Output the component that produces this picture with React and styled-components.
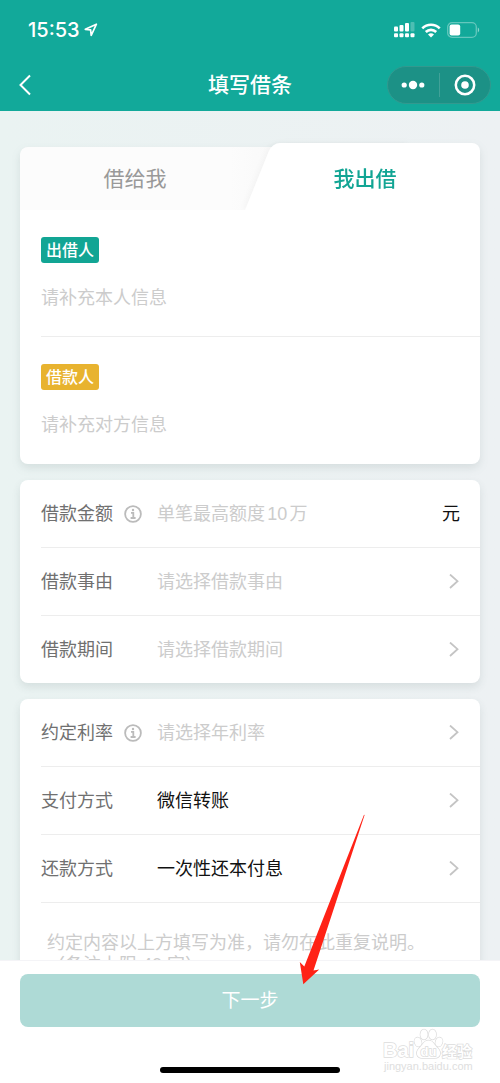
import React, { useState } from 'react'
import styled, { createGlobalStyle } from 'styled-components'

const GlobalStyle = createGlobalStyle`
* {
    box-sizing: border-box;
}

body {
    margin: 0;
    background: #fff;
}

body, button, input, select, textarea {
    font-family: 'Liberation Sans', 'Noto Sans CJK SC', sans-serif;
}

button {
    border: 0;
    padding: 0;
    background: none;
    cursor: pointer;
}
`

const Screen = styled.div`
position: relative;
display: flex;
flex-direction: column;
width: 100%;
height: 100vh;
overflow: hidden;
`

const Header = styled.header`
flex: none;
background: #12a99a;
color: #fff;
`

const StatusBar = styled.div`
display: flex;
align-items: center;
justify-content: space-between;
height: 60px;
padding: 0 20px 0 28px;
`

const Clock = styled.div`
display: flex;
align-items: center;
gap: 4px;
font: 500 20px/24px Inter, sans-serif;
`

const StatusIcons = styled.div`
display: flex;
align-items: center;
gap: 6px;
`

const NavBar = styled.nav`
display: grid;
grid-template-columns: 1fr auto 1fr;
align-items: center;
height: 51px;
padding: 0 9px 2px;
`

const BackButton = styled.button`
display: flex;
justify-self: start;
padding: 8px;
color: #fff;
`

const Title = styled.h1`
margin: 0;
font-size: 21px;
line-height: 28px;
font-weight: 500;
`

const Capsule = styled.div`
display: flex;
align-items: center;
justify-self: end;
width: 104px;
height: 38px;
border: 1px solid #32998f;
border-radius: 19px;
background: #1c9186;
`

const CapsuleButton = styled.button`
display: flex;
flex: 1;
align-items: center;
justify-content: center;
height: 24px;
color: #fff;

& + & {
    border-left: 1px solid #41a198;
}
`

const Main = styled.main`
display: flex;
flex: 1;
flex-direction: column;
gap: 16px;
min-height: 0;
padding: 32px 20px 0;
overflow: hidden;
background: linear-gradient(to right, #eaf3f2, #edf1f3);
`

const Card = styled.section`
flex: none;
border-radius: 8px;
background: #fff;
box-shadow: 0 4px 8px rgba(60, 80, 80, 0.12);
`

const PartyCard = styled.section`
flex: none;
filter: drop-shadow(0 4px 4px rgba(60, 80, 80, 0.12));
`

const Tabs = styled.div`
display: flex;
height: 67px;
`

const Tab = styled.button`
position: relative;
flex: 1;
padding-top: 5px;
isolation: isolate;
font-size: 21px;
line-height: 28px;
font-weight: ${props => (props.$active ? 500 : 400)};
color: ${props => (props.$active ? '#12a594' : '#999')};
`

const LeftTab = styled(Tab)`
&::before {
    content: '';
    position: absolute;
    z-index: -1;
    top: 4px;
    right: -32px;
    bottom: 0;
    left: 0;
    border-radius: 8px 0 0 0;
    background: linear-gradient(to right, #fcfcfc 80%, #f8f8f8);
}
`

/* slanted left edge is a skewed block, the straight right part is a second one */
const RightTab = styled(Tab)`
&::before, &::after {
    content: '';
    position: absolute;
    z-index: -1;
    top: 0;
    bottom: 0;
    background: #fff;
}

&::before {
    left: -5px;
    width: 60%;
    border-radius: 8px 0 0 0;
    transform: skewX(-22deg);
    transform-origin: left bottom;
    box-shadow: -2px 0 6px rgba(0, 0, 0, 0.03);
}

&::after {
    right: 0;
    width: 60%;
    border-radius: 0 8px 0 0;
}
`

const Parties = styled.div`
position: relative;
padding-left: 21px;
border-radius: 0 0 8px 8px;
background: #fff;
`

const Party = styled.div`
display: flex;
flex-direction: column;
align-items: flex-start;
gap: 22px;
padding: 27px 0 25px;
border-bottom: 1px solid #ededed;

&:last-child {
    border-color: transparent;
}
`

const Tag = styled.span`
padding: 1px 5px 0;
border-radius: 3px;
background: ${props => props.$color};
color: #fff;
font-size: 16px;
line-height: 25px;
font-weight: 500;
`

const PartyButton = styled.button`
color: #ccc;
font-size: 18px;
line-height: 26px;
`

const Row = styled.div`
display: flex;
align-items: center;
height: 68px;
margin-left: 21px;
padding-right: 20px;
border-bottom: 1px solid #ededed;

&:last-child {
    height: 67px;
    border-bottom: 0;
}
`

const RowHead = styled.div`
display: flex;
flex: none;
align-items: center;
gap: 11px;
width: 116px;
`

const Label = styled.label`
color: #707070;
font-size: 18px;
line-height: 26px;
`

const InfoButton = styled.button`
display: flex;
color: #bbb;
`

const TextInput = styled.input`
flex: 1;
min-width: 0;
padding: 0;
border: 0;
outline: 0;
background: none;
color: #111;
font-size: 18px;
line-height: 26px;
text-autospace: normal;

&::placeholder {
    color: #ccc;
}
`

const Select = styled.select`
flex: 1;
min-width: 0;
padding: 0;
border: 0;
outline: 0;
appearance: none;
background: none;
color: ${props => (props.$empty ? '#ccc' : '#111')};
font-size: 18px;
line-height: 26px;
`

const Unit = styled.span`
color: #111;
font-size: 18px;
line-height: 26px;
`

const Note = styled.textarea`
display: block;
width: 100%;
height: 120px;
padding: 29px 20px 0 27px;
border: 0;
outline: 0;
resize: none;
background: none;
font-size: 18px;
line-height: 22px;

&::placeholder {
    color: #ccc;
}
`

const Footer = styled.footer`
position: relative;
display: flex;
flex: none;
flex-direction: column;
align-items: center;
gap: 40px;
padding: 13px 20px 10px;
border-top: 1px solid #f4f4f7;
background: #fff;
`

const NextButton = styled.button`
width: 100%;
height: 53px;
border-radius: 8px;
background: #aedad6;
color: #fff;
font-size: 19px;
line-height: 26px;
`

const HomeIndicator = styled.div`
width: 39%;
height: 6px;
border-radius: 3px;
background: #000;
`

const Watermark = styled.svg`
position: absolute;
right: 24px;
bottom: 8px;
`

const Arrow = styled.svg`
position: absolute;
left: 59%;
bottom: 93px;
pointer-events: none;
`

const Chevron = () => (
    <svg width="12" height="16" viewBox="0 0 12 16" fill="none" stroke="#c4c4c4" strokeWidth="1.8" aria-hidden="true">
        <path d="M2 .5l7.500 6.700L2 14" />
    </svg>
)

const InfoIcon = () => (
    <svg width="18" height="18" viewBox="0 0 18 18" fill="none" stroke="currentColor" strokeWidth="1.8">
        <circle cx="9" cy="9" r="7.9" />
        <path d="M7 7.8h2.3v5M6.6 13h5" />
        <circle cx="9" cy="5" r="1.2" fill="currentColor" stroke="none" />
    </svg>
)

const LocationIcon = () => (
    <svg width="14" height="14" viewBox="0 0 14 14" fill="none" stroke="#fff" strokeWidth="1.7" strokeLinejoin="round">
        <path d="M12.4 1.2L1.3 6.3l5.3.5.6 5.7z" />
    </svg>
)

const SignalIcon = () => (
    <svg width="21" height="16" viewBox="0 0 21 16" fill="#fff">
        <rect x="0" y="4.5" width="4" height="5" rx="1" />
        <rect x="5.5" y="3" width="4" height="6.5" rx="1" />
        <rect x="11" y="1" width="4" height="8.5" rx="1" />
        <rect x="16.5" y="0" width="4" height="9.5" rx="1" opacity="0.25" />
        <rect x="0" y="11.3" width="4" height="4" rx="1" />
        <rect x="5.5" y="11.3" width="4" height="4" rx="1" />
        <rect x="11" y="11.3" width="4" height="4" rx="1" />
        <rect x="16.5" y="11.3" width="4" height="4" rx="1" />
    </svg>
)

const WifiIcon = () => (
    <svg width="20" height="15" viewBox="0 0 20 15" fill="none" stroke="#fff" strokeWidth="2.6">
        <path d="M1.3 5.4a12.3 12.3 0 0 1 17.4 0" />
        <path d="M4.8 9a7.4 7.4 0 0 1 10.4 0" />
        <path d="M10 14.6l-3-3a4.3 4.3 0 0 1 6 0z" fill="#fff" stroke="none" />
    </svg>
)

const BatteryIcon = () => (
    <svg width="33" height="16" viewBox="0 0 33 16" fill="none">
        <rect x="0.7" y="0.7" width="28.6" height="14.6" rx="4.4" stroke="#fff" strokeOpacity="0.35" strokeWidth="1.3" />
        <rect x="2.6" y="2.6" width="10.6" height="10.8" rx="2" fill="#fff" />
        <path d="M30.8 5.6c1.8.7 1.8 4.1 0 4.8z" fill="#fff" fillOpacity="0.5" />
    </svg>
)

const SelectRow = ({ id, label, info, placeholder, options }) => {
    const [value, setValue] = useState(placeholder ? '' : options[0])

    return (
        <Row>
            <RowHead>
                <Label htmlFor={id}>{label}</Label>
                {info && <InfoButton type="button" aria-label={info}><InfoIcon /></InfoButton>}
            </RowHead>
            <Select id={id} value={value} $empty={!value} onChange={e => setValue(e.target.value)}>
                {placeholder && <option value="">{placeholder}</option>}
                {options.map(option => <option key={option}>{option}</option>)}
            </Select>
            <Chevron />
        </Row>
    )
}

const App = () => {
    const [tab, setTab] = useState('lend')

    return (
        <Screen>
            <GlobalStyle />
            <Header>
                <StatusBar>
                    <Clock>15:53<LocationIcon /></Clock>
                    <StatusIcons>
                        <SignalIcon />
                        <WifiIcon />
                        <BatteryIcon />
                    </StatusIcons>
                </StatusBar>
                <NavBar>
                    <BackButton type="button" aria-label="返回">
                        <svg width="16" height="22" viewBox="0 0 16 22" fill="none" stroke="currentColor" strokeWidth="2">
                            <path d="M13 1.5L3.5 11l9.5 9.5" />
                        </svg>
                    </BackButton>
                    <Title>填写借条</Title>
                    <Capsule>
                        <CapsuleButton type="button" aria-label="更多">
                            <svg width="24" height="10" viewBox="0 0 24 10" fill="currentColor">
                                <circle cx="3.2" cy="5" r="2.6" />
                                <circle cx="12" cy="5" r="4.2" />
                                <circle cx="20.8" cy="5" r="2.6" />
                            </svg>
                        </CapsuleButton>
                        <CapsuleButton type="button" aria-label="关闭">
                            <svg width="22" height="22" viewBox="0 0 22 22" fill="none">
                                <circle cx="11" cy="11" r="9.2" stroke="currentColor" strokeWidth="2.5" />
                                <circle cx="11" cy="11" r="3.8" fill="currentColor" />
                            </svg>
                        </CapsuleButton>
                    </Capsule>
                </NavBar>
            </Header>

            <Main>
                <PartyCard>
                    <Tabs role="tablist">
                        <LeftTab type="button" role="tab" aria-selected={tab === 'borrow'} $active={tab === 'borrow'} onClick={() => setTab('borrow')}>借给我</LeftTab>
                        <RightTab type="button" role="tab" aria-selected={tab === 'lend'} $active={tab === 'lend'} onClick={() => setTab('lend')}>我出借</RightTab>
                    </Tabs>
                    <Parties>
                        <Party>
                            <Tag $color="#12a594">出借人</Tag>
                            <PartyButton type="button">请补充本人信息</PartyButton>
                        </Party>
                        <Party>
                            <Tag $color="#e8b32f">借款人</Tag>
                            <PartyButton type="button">请补充对方信息</PartyButton>
                        </Party>
                    </Parties>
                </PartyCard>

                <Card>
                    <Row>
                        <RowHead>
                            <Label htmlFor="amount">借款金额</Label>
                            <InfoButton type="button" aria-label="金额说明"><InfoIcon /></InfoButton>
                        </RowHead>
                        <TextInput id="amount" inputMode="numeric" placeholder="单笔最高额度10万" />
                        <Unit>元</Unit>
                    </Row>
                    <SelectRow id="reason" label="借款事由" placeholder="请选择借款事由" options={['资金周转', '其他']} />
                    <SelectRow id="period" label="借款期间" placeholder="请选择借款期间" options={['一个月', '一年']} />
                </Card>

                <Card>
                    <SelectRow id="rate" label="约定利率" info="利率说明" placeholder="请选择年利率" options={['0%', '6%']} />
                    <SelectRow id="pay" label="支付方式" options={['微信转账', '现金']} />
                    <SelectRow id="repay" label="还款方式" options={['一次性还本付息', '分期还款']} />
                    <Note aria-label="备注" placeholder={'约定内容以上方填写为准，请勿在此重复说明。\n（备注上限 40 字）'} />
                </Card>
            </Main>

            <Footer>
                <NextButton type="button">下一步</NextButton>
                <HomeIndicator />
                <Watermark width="96" height="48" viewBox="0 0 96 48" fill="#fff" stroke="#dcdcdc" strokeWidth="1.4" paintOrder="stroke" fontFamily="'Liberation Sans', 'Noto Sans CJK SC', sans-serif" fontWeight="700">
                    <text x="3" y="30" fontSize="20">Bai</text>
                    <ellipse cx="38" cy="15" rx="3.4" ry="4.6" transform="rotate(-18 38 15)" />
                    <ellipse cx="44" cy="7.500" rx="3.6" ry="5" />
                    <ellipse cx="52.500" cy="7.500" rx="3.6" ry="5" />
                    <ellipse cx="59" cy="15" rx="3.4" ry="4.6" transform="rotate(18 59 15)" />
                    <path d="M48.500 13.500c5 0 6 5 9.500 8 4 4 2 9.500-3 9.500H42c-5 0-7-5.500-3-9.500 3.500-3 4.500-8 9.500-8z" />
                    <text x="40.500" y="29" fontSize="13">du</text>
                    <text x="62" y="30" fontSize="15">经验</text>
                    <text x="4" y="43" fontSize="11" fontWeight="400" fill="#dedede" stroke="none">jingyan.baidu.com</text>
                </Watermark>
            </Footer>

            <Arrow width="76" height="180" viewBox="0 0 76 180" fill="#ff2216" aria-hidden="true">
                <path d="M69.600 5L18.500 160.500l5.700-1L8.300 174.300 4.800 152l4.500 4.500L69 4.700z" />
            </Arrow>
        </Screen>
    )
}

export default App
